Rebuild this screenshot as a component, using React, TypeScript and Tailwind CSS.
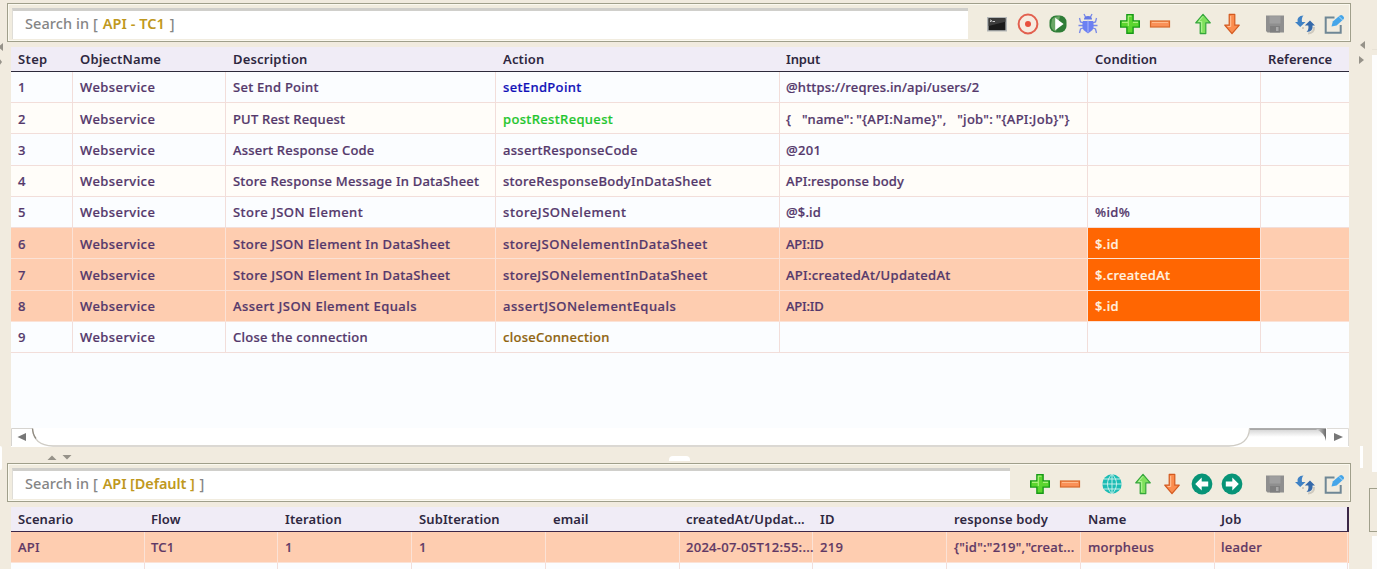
import React from "react";

const font = "font-['Noto_Sans','Open_Sans',sans-serif]";

const rowHeights = ["h-[31px]", "h-[31px]", "h-8", "h-[31px]", "h-[31px]", "h-[31px]", "h-8", "h-[31px]", "h-[31px]"];

const stepColumns = "grid grid-cols-[62px_153px_270px_284px_308px_173px_88px]";
const dataColumns = "grid grid-cols-[134px_133px_134px_134px_134px_133px_134px_134px_134px_133px_1px]";

const stepHeaders = ["Step", "ObjectName", "Description", "Action", "Input", "Condition", "Reference"];

const jsonInput = "{    \"name\": \"{API:Name}\",    \"job\": \"{API:Job}\"}";

const steps: string[][] = [
  ["1", "Webservice", "Set End Point", "setEndPoint", "@https://reqres.in/api/users/2", "", ""],
  ["2", "Webservice", "PUT Rest Request", "postRestRequest", jsonInput, "", ""],
  ["3", "Webservice", "Assert Response Code", "assertResponseCode", "@201", "", ""],
  ["4", "Webservice", "Store Response Message In DataSheet", "storeResponseBodyInDataSheet", "API:response body", "", ""],
  ["5", "Webservice", "Store JSON Element", "storeJSONelement", "@$.id", "%id%", ""],
  ["6", "Webservice", "Store JSON Element In DataSheet", "storeJSONelementInDataSheet", "API:ID", "$.id", ""],
  ["7", "Webservice", "Store JSON Element In DataSheet", "storeJSONelementInDataSheet", "API:createdAt/UpdatedAt", "$.createdAt", ""],
  ["8", "Webservice", "Assert JSON Element Equals", "assertJSONelementEquals", "API:ID", "$.id", ""],
  ["9", "Webservice", "Close the connection", "closeConnection", "", "", ""],
];

const actionColors: Record<string, string> = {
  setEndPoint: "text-[#1010b8]",
  postRestRequest: "text-[#1fc62f]",
  closeConnection: "text-[#8f6410]",
};

const tracking: Record<string, string> = {
  Webservice: "tracking-[0.43px]",
  "Set End Point": "tracking-[0.26px]",
  "PUT Rest Request": "tracking-[0.19px]",
  "Assert Response Code": "tracking-[0.2px]",
  "Store Response Message In DataSheet": "tracking-[0.22px]",
  "Store JSON Element": "tracking-[0.46px]",
  "Store JSON Element In DataSheet": "tracking-[0.37px]",
  "Assert JSON Element Equals": "tracking-[0.45px]",
  "Close the connection": "tracking-[0.25px]",
  assertResponseCode: "tracking-[0.28px]",
  storeResponseBodyInDataSheet: "tracking-[0.28px]",
  storeJSONelement: "tracking-[0.57px]",
  storeJSONelementInDataSheet: "tracking-[0.48px]",
  assertJSONelementEquals: "tracking-[0.53px]",
  closeConnection: "tracking-[0.27px]",
  "@https://reqres.in/api/users/2": "tracking-[0.18px]",
  [jsonInput]: "tracking-[0.29px] [word-spacing:-1px]",
  "API:response body": "tracking-[0.12px]",
  "@$.id": "tracking-[0.15px]",
  "API:ID": "tracking-[-0.2px]",
  "API:createdAt/UpdatedAt": "tracking-[0.32px]",
};

function Svg({ children }: { children: React.ReactNode }) {
  return (
    <svg width="22" height="22" viewBox="0 0 22 22" fill="none" className="shrink-0">
      {children}
    </svg>
  );
}

const Terminal = () => (
  <Svg>
    <rect x="1" y="4" width="20" height="14.500" fill="#b5b8b8" />
    <rect x="2.600" y="5.200" width="16.800" height="12" fill="#1b1b1b" />
    <path d="M2.600 5.200h16.800v3.500L2.600 13z" fill="#3d3d3d" />
    <path d="M4 6.800l1.800 1-1.800 1M6.500 8.500h2.500" stroke="#dcdcdc" strokeWidth=".9" />
  </Svg>
);
const Target = () => (
  <Svg>
    <circle cx="11" cy="11" r="9.400" stroke="#e2604f" strokeWidth="2" fill="#f6ebe0" />
    <circle cx="11" cy="11" r="3" fill="#e8503f" />
  </Svg>
);
const Play = () => (
  <Svg>
    <rect x="2.500" y="2.500" width="17" height="17" rx="6.500" fill="#2f7d37" />
    <path d="M5 6q3-3 8-2.600l-4 15Q4 17 4 12z" fill="#6aa766" />
    <path d="M8.200 4.800l8.400 6.200-8.400 6.200z" fill="#fff" />
  </Svg>
);
const Bug = () => (
  <Svg>
    <path d="M7 1l2 4M15 1l-2 4M2.500 5l1 4 4 1M19.500 5l-1 4-4 1M1.500 12.500h19M2.500 20l1-4 4-1.500M19.500 20l-1-4-4-1.500" stroke="#7788e8" strokeWidth="1.300" />
    <path d="M7 6.500a4 3.500 0 0 1 8 0z" fill="#6478e6" />
    <path d="M6 8h10q1.500 5-.5 9L11 20.500 6.500 17Q4.500 13 6 8z" fill="#6c80f2" />
    <path d="M11 7.500v12" stroke="#aab6fa" />
  </Svg>
);
const Plus = () => (
  <Svg>
    <path d="M7.900 1.700h6.200v6.200h6.200v6.200h-6.200v6.200H7.900v-6.200H1.700V7.900h6.200z" fill="#5cd62f" stroke="#179a17" strokeWidth="1.400" />
    <path d="M9.300 13V3.200h3.200M3 9.400h6M14 9.400h5" stroke="#a9f07c" strokeWidth="1.200" />
  </Svg>
);
const Minus = () => (
  <Svg>
    <rect x="1.500" y="8" width="19" height="6" fill="#fa9158" stroke="#d86a2c" strokeWidth="1.200" />
    <path d="M3 9.500h16" stroke="#ffbb8c" />
  </Svg>
);
const ArrowUp = () => (
  <Svg>
    <path d="M11 1.300l7.300 8.500h-4.500v10.800H8.200V9.800H3.700z" fill="#7fe05c" stroke="#35a63c" strokeWidth="1.200" strokeLinejoin="round" />
    <path d="M9.700 19V8.500H6.500L11 3.300" stroke="#b5f59a" />
  </Svg>
);
const ArrowDown = () => (
  <Svg>
    <path d="M11 20.700l7.300-8.500h-4.500V1.400H8.200v10.800H3.700z" fill="#fb8c4e" stroke="#d35a20" strokeWidth="1.200" strokeLinejoin="round" />
    <path d="M9.700 3v10.500H6.500" stroke="#ffc39b" />
  </Svg>
);
const Save = () => (
  <Svg>
    <path d="M2 2.500h18v17H3.500L2 18z" fill="#8f8f8f" />
    <rect x="5.500" y="3.200" width="11" height="7.300" fill="#9f9f9f" />
    <rect x="6" y="13" width="10" height="6.500" fill="#7f7f7f" />
    <rect x="12" y="14" width="2.500" height="4" fill="#a9a9a9" />
  </Svg>
);
const Refresh = () => (
  <Svg>
    <path d="M14 20.500q6.500-.5 6-6.500M8 15l2 0" stroke="#cfcabf" strokeWidth="2" />
    <path d="M9.500 2.500Q2.500 3 3.600 9H1l5.200 5L11.500 9H8Q7.200 5 9.500 2.500z" fill="#3f82c5" />
    <path d="M12.500 19Q19.500 18.500 18.500 12.500H21l-5-5-5.200 5H14.300q.8 4-1.800 6.500z" fill="#3569aa" />
  </Svg>
);
const Edit = () => (
  <Svg>
    <path d="M11.500 4.500H2.700v15.300h15V12" stroke="#6f8795" strokeWidth="2" />
    <path d="M8.500 13.500l1.300-5 7-6q1.500-1 3.200.5t.8 3l-7.200 6.400z" fill="#46a6e9" />
    <path d="M16 3.500l3.500 3.500" stroke="#d4ebf8" strokeWidth=".8" />
  </Svg>
);
const Globe = () => (
  <Svg>
    <circle cx="11" cy="11" r="9.700" fill="#1cbcb4" />
    <path d="M1 11h20M3 6h16M3 16h16M11 1v20M11 1.300c-6 5-6 14.400 0 19.400M11 1.300c6 5 6 14.400 0 19.400" stroke="#d5f3ee" strokeWidth=".9" />
  </Svg>
);
const CircleArrow = ({ right = false }: { right?: boolean }) => (
  <Svg>
    <circle cx="11" cy="11" r="10.400" fill="#079477" />
    <path
      d={right ? "M17.800 11l-6.500-6.500v4H4.800v5h6.500v4z" : "M4.200 11l6.500-6.500v4h6.500v5h-6.500v4z"}
      fill="#fff"
    />
  </Svg>
);
const Gap = ({ className }: { className: string }) => <span className={"shrink-0 " + className} />;

function Toolbar({ label, labelClass, width, children }: { label: string; labelClass: string; width: string; children: React.ReactNode }) {
  return (
    <div className="flex h-[39px] shrink-0 items-start border border-[#a09f8b] bg-[#f1ecdf] pt-[4px] pl-[4px] shadow-[inset_0_0_0_1px_#fbf9ef]">
      <div className={"flex h-[31px] shrink-0 items-center border-t-[3px] border-l border-t-[#d0cfcb] border-l-[#dfddd7] bg-white pb-[3px] pl-3 text-[14.5px] whitespace-pre text-[#858585] " + width}>
        <span className="font-medium tracking-[0.08px]">Search in [ </span>
        <span className={"ml-px font-semibold text-[#bf9820] " + labelClass}>{label}</span>
        <span className="ml-px font-medium"> ]</span>
      </div>
      <div className="flex h-[31px] items-center">{children}</div>
    </div>
  );
}

const Triangle = ({ points }: { points: string }) => (
  <svg width="10" height="10" viewBox="0 0 10 10" className="shrink-0">
    <polygon points={points} fill="#969289" />
  </svg>
);

function StepTable() {
  return (
    <div className="mt-[5px] ml-[4px] h-[381px] w-[1338px] shrink-0 bg-[#fbfdff]">
      <div className={stepColumns + " h-[25px] items-center border-b border-[#2d2a3b] bg-[#f0ecf6] pt-px text-[13px] font-semibold tracking-[0.05px] text-[#2e2740]"}>
        {stepHeaders.map((h, i) => (
          <div key={h} className={i === 0 ? "pl-[7px] tracking-[0.35px]" : i < 4 ? "pl-[7px] tracking-[0.16px]" : i === 4 ? "pl-1.5 tracking-[-0.15px]" : "pl-[7px]"}>{h}</div>
        ))}
      </div>
      {steps.map((row, r) => {
        const selected = r >= 5 && r <= 7;
        return (
          <div
            key={row[0]}
            className={
              stepColumns + " " + rowHeights[r] + " text-[13px] font-medium text-[#54386b] [-webkit-text-stroke:0.2px] " +
              (selected ? "bg-[#fecdb0]" : r % 2 === 1 ? "bg-[#fffdf9]" : "bg-[#fbfdff]")
            }
          >
            {row.map((text, c) => {
              const hot = selected && c === 5;
              return (
                <div
                  key={c}
                  className={
                    "flex items-center whitespace-pre border-b " +
                    (r === 1 || r === 5 ? "pt-[3px] " : "pt-0.5 ") +
                    (c < 6 ? "border-r " : "") +
                    (c === 4 ? "pl-1.5 " : "pl-[7px] ") +
                    (selected ? "border-[#fbe2d6] " : "border-[#f2deda] ") +
                    (hot ? "bg-[#ff6602] text-[#fff3e0] " : "") +
                    (c === 3 ? (actionColors[text] ?? "") + " " : "") +
                    (tracking[text] ?? "tracking-[0.35px]")
                  }
                >
                  {text}
                </div>
              );
            })}
          </div>
        );
      })}
    </div>
  );
}

const dataHeaders = ["Scenario", "Flow", "Iteration", "SubIteration", "email", "createdAt/Updat...", "ID", "response body", "Name", "Job"];
const dataRow = ["API", "TC1", "1", "1", "", "2024-07-05T12:55:...", "219", "{\"id\":\"219\",\"creat...", "morpheus", "leader"];
const dataPadding = ["pl-[7px]", "pl-1.5", "pl-[7px]", "pl-[7px]", "pl-[7px]", "pl-1.5", "pl-[7px]", "pl-[7px]", "pl-[7px]", "pl-1.5"];

function DataTable() {
  return (
    <div className="mt-[5px] ml-[4px] w-[1338px] shrink-0 bg-[#fbfdff] text-[13px]">
      <div className={dataColumns + " h-[25px] items-center border-r-2 border-b border-[#3b2748] bg-[#f0ecf6] pt-px font-semibold tracking-[0.1px] text-[#2e2740]"}>
        {dataHeaders.map((h, i) => (
          <div key={h} className={"whitespace-pre " + dataPadding[i]}>{h}</div>
        ))}
      </div>
      <div className={dataColumns + " h-[31px] bg-[#fecdb0] font-medium tracking-[0.26px] text-[#5f3865] [-webkit-text-stroke:0.2px]"}>
        {dataRow.map((t, i) => (
          <div key={i} className={"flex items-center border-r border-b border-[#fbe2d6] pt-0.5 whitespace-pre " + dataPadding[i]}>{t}</div>
        ))}
      </div>
      <div className={dataColumns + " h-[7px]"}>
        {dataRow.map((_, i) => (
          <div key={i} className="border-r border-[#f2deda]" />
        ))}
      </div>
    </div>
  );
}

function ScrollBar() {
  return (
    <div className="ml-[4px] flex h-[19px] w-[1338px] shrink-0 bg-white">
      <svg width="1338" height="19" viewBox="0 0 1338 19">
        <defs>
          <linearGradient id="track" x1="0" y1="0" x2="0" y2="1">
            <stop offset="0" stopColor="#d0d0d0" />
            <stop offset=".5" stopColor="#fff" />
          </linearGradient>
          <linearGradient id="trackEnd" x1="0" y1="0" x2="1" y2="0">
            <stop offset="0" stopColor="#ddd" />
            <stop offset="1" stopColor="#6a6a6a" />
          </linearGradient>
        </defs>
        <path d="M.5 18V.5H21" stroke="#d6d4d0" fill="none" />
        <path d="M15 5v8L6.500 9z" fill="#777" />
        <path d="M1238 .5h77v17h-97q18-2 20-17z" fill="url(#track)" />
        <path d="M1238 1h77" stroke="#999" strokeWidth="1.500" />
        <path d="M1305 1h10v12q-1-8-10-12z" fill="url(#trackEnd)" />
        <path d="M21.500 .5C22 12 29 17.500 42 18H1218c13-.5 20-6 20.500-17.500" stroke="#cfccc5" strokeWidth="1.300" fill="#fff" />
        <path d="M21.500 .5q.3 6 3.500 10" stroke="#8f8a80" strokeWidth="1.300" fill="none" />
        <path d="M1316 .5h21.500V18" stroke="#dedcd8" fill="none" />
        <path d="M1323 5v8l9-4z" fill="#777" />
      </svg>
    </div>
  );
}

export default function App() {
  return (
    <div className={"flex h-[569px] w-[1377px] overflow-hidden bg-[#f1ebdf] antialiased " + font}>
      <aside className="flex w-[7px] shrink-0 flex-col">
        <svg width="7" height="27" viewBox="0 0 7 27" className="mt-[42px]">
          <path d="M3 1v8L-2 5zM-1 16l3 4-3 4z" fill="#969289" />
        </svg>
        <div className="mt-[377px] h-6 w-0.5 rounded-r-sm bg-white" />
      </aside>

      <main className="flex w-[1344px] shrink-0 flex-col pt-[3px]">
        <Toolbar label="API - TC1" labelClass="tracking-[0.05px]" width="w-[956px]">
          <Gap className="w-[18px]" />
          <Terminal />
          <Gap className="w-[9px]" />
          <Target />
          <Gap className="w-2" />
          <Play />
          <Gap className="w-2" />
          <Bug />
          <Gap className="w-5" />
          <Plus />
          <Gap className="w-2" />
          <Minus />
          <Gap className="w-[21px]" />
          <ArrowUp />
          <Gap className="w-[7px]" />
          <ArrowDown />
          <Gap className="w-[21px]" />
          <Save />
          <Gap className="w-2" />
          <Refresh />
          <Gap className="w-[7px]" />
          <Edit />
        </Toolbar>

        <StepTable />
        <ScrollBar />

        <div className="flex h-4 shrink-0 items-center">
          <div className="flex w-[662px] items-center gap-[5px] pt-[5px] pl-10">
            <Triangle points="0.500,7 5,2.500 9.500,7" />
            <Triangle points="0.500,2 5,6.500 9.500,2" />
          </div>
          <div className="mt-[7px] h-[5px] w-[21px] rounded-t-sm bg-white" />
        </div>

        <Toolbar label="API [Default ]" labelClass="tracking-[-0.1px]" width="w-[998px]">
          <Gap className="w-[19px]" />
          <Plus />
          <Gap className="w-2" />
          <Minus />
          <Gap className="w-5" />
          <Globe />
          <Gap className="w-[9px]" />
          <ArrowUp />
          <Gap className="w-[7px]" />
          <ArrowDown />
          <Gap className="w-2" />
          <CircleArrow />
          <Gap className="w-2" />
          <CircleArrow right />
          <Gap className="w-[21px]" />
          <Save />
          <Gap className="w-2" />
          <Refresh />
          <Gap className="w-[7px]" />
          <Edit />
        </Toolbar>
        <DataTable />
      </main>

      <aside className="flex w-[21px] shrink-0 flex-col pt-10 pl-1.5">
        <Triangle points="8,1 3,5 8,9" />
        <div className="h-[5px]" />
        <Triangle points="2,1 7,5 2,9" />
        <div className="mt-[381px] ml-[3px] h-[22px] w-[3px] bg-white" />
        <div className="mt-5 -mr-8 ml-3 h-11 border border-r-0 border-[#a09f8b]" />
      </aside>
      <aside className="flex flex-1 flex-col">
        <div className="h-[50px] border-b border-[#e8e2d6]" />
        <div className="mt-[5px] h-[417px] bg-[#fdfdfd]" />
        <div className="h-16" />
        <div className="flex-1 bg-[#fdfdfd]" />
      </aside>
    </div>
  );
}
